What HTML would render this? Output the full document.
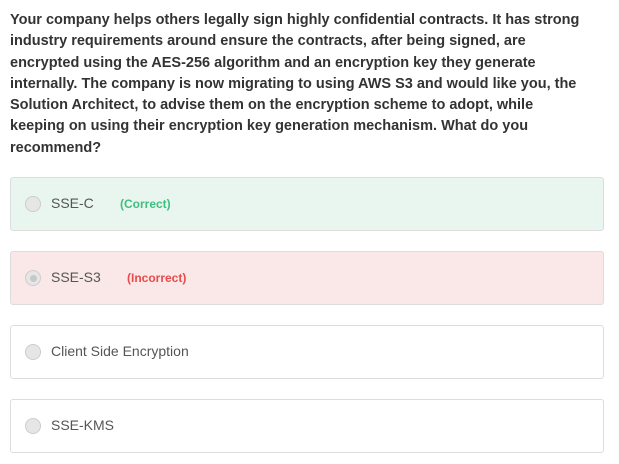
<!DOCTYPE html>
<html><head><style>
body{margin:0;background:#fff;font-family:"Liberation Sans",sans-serif;}
.q{position:absolute;left:10px;top:10px;width:610px;font-size:14.5px;font-weight:bold;line-height:21.3px;color:#333;white-space:nowrap;}
.opt{position:absolute;left:10px;width:592px;height:52px;border:1px solid #ddd;border-radius:3px;background:#fff;}
.opt .r{position:absolute;left:14px;top:18px;width:16px;height:16px;border-radius:50%;background:#e6e6e6;border:1px solid #ccc;box-sizing:border-box;}
.opt .t{position:absolute;left:40px;top:17px;font-size:14px;color:#555;}
.opt .s{position:absolute;top:19px;font-size:12px;font-weight:bold;}
</style></head><body>
<div class="q">Your company helps others legally sign highly confidential contracts. It has strong<br>industry requirements around ensure the contracts, after being signed, are<br>encrypted using the AES-256 algorithm and an encryption key they generate<br>internally. The company is now migrating to using AWS S3 and would like you, the<br>Solution Architect, to advise them on the encryption scheme to adopt, while<br>keeping on using their encryption key generation mechanism. What do you<br>recommend?</div>
<div class="opt" style="top:177px;background:#e8f6ef;"><div class="r"></div><div class="t">SSE-C</div><div class="s" style="left:109px;color:#3fbf7f">(Correct)</div></div>
<div class="opt" style="top:251px;background:#f9e8e7;"><div class="r"><div style="position:absolute;left:3.5px;top:3.5px;width:7px;height:7px;border-radius:50%;background:#c8c8c8"></div></div><div class="t">SSE-S3</div><div class="s" style="left:116px;color:#e84b4b">(Incorrect)</div></div>
<div class="opt" style="top:325px;"><div class="r"></div><div class="t">Client Side Encryption</div></div>
<div class="opt" style="top:399px;"><div class="r"></div><div class="t">SSE-KMS</div></div>
</body></html>
